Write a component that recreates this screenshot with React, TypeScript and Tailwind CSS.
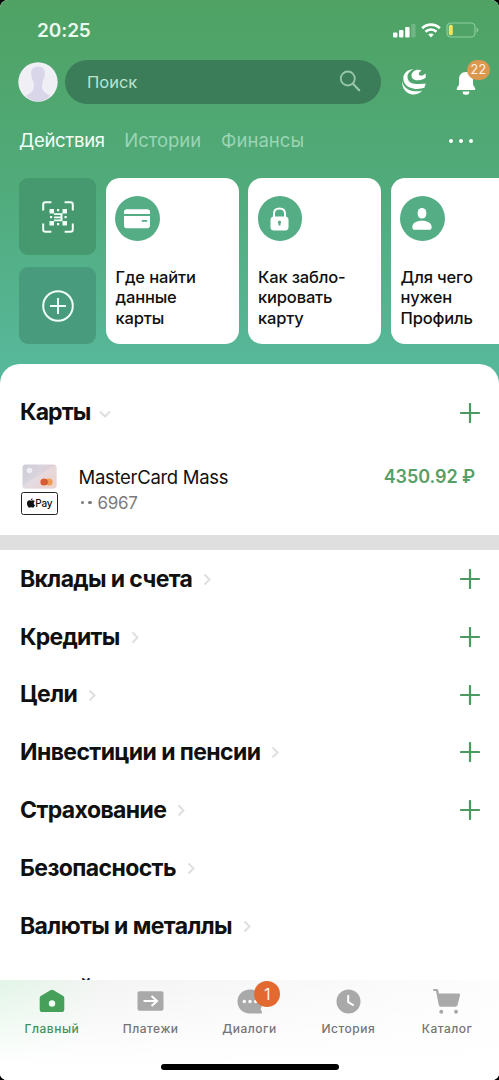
import type { ReactNode } from "react";
import clsx from "clsx";

interface Section {
  title: string;
  tracking: string;
  add?: boolean;
}

const SECTIONS: Section[] = [
  { title: "Вклады и счета", tracking: "tracking-[-0.63px]", add: true },
  { title: "Кредиты", tracking: "tracking-[-0.76px]", add: true },
  { title: "Цели", tracking: "tracking-[-0.6px]", add: true },
  { title: "Инвестиции и пенсии", tracking: "tracking-[-0.6px]", add: true },
  { title: "Страхование", tracking: "tracking-[-0.6px]", add: true },
  { title: "Безопасность", tracking: "tracking-[-0.6px]" },
  { title: "Валюты и металлы", tracking: "tracking-[-0.6px]" },
];

function Plus() {
  return (
    <svg width="20" height="20" viewBox="0 0 20 20" className="shrink-0">
      <path d="M10 1v18M1 10h18" stroke="#4a9a5f" strokeWidth="2.2" strokeLinecap="round" />
    </svg>
  );
}

function Chevron({ down }: { down?: boolean }) {
  return (
    <svg width="12" height="14" viewBox="0 0 12 14" fill="none" stroke="#dfdfdf" strokeWidth="2">
      {down ? <path d="M1 5.500l5 5 5-5" /> : <path d="M3.500 2.500L8.500 7.500l-5 5" />}
    </svg>
  );
}

function StatusBar() {
  return (
    <div className="flex h-[60px] items-center justify-between pr-5 pl-[37px]">
      <span className="mt-0.5 text-[19px] font-semibold tracking-[-0.1px] text-[#eafbf0]">20:25</span>
      <div className="flex items-center">
        <svg width="24" height="15" viewBox="0 0 24 15" fill="#fff">
          <rect x="1" y="9.5" width="4.4" height="5" rx="1" />
          <rect x="7" y="7" width="4.4" height="7.500" rx="1" />
          <rect x="13.200" y="4" width="4.400" height="10.500" rx="1" />
          <rect x="19.200" y="1" width="4.400" height="13.500" rx="1" opacity=".2" />
        </svg>
        <svg width="20" height="15" viewBox="0 0 20 15" fill="none" stroke="#fff" className="ml-[5px]">
          <path d="M1.200 5.200c5-4.900 12.600-4.900 17.600 0" strokeWidth="2.700" />
          <path d="M4.500 8.700c3.200-3 7.800-3 11 0" strokeWidth="2.600" />
          <path d="M10 14.500l-2.800-3c1.600-1.400 4-1.400 5.600 0z" fill="#fff" stroke="none" />
        </svg>
        <svg width="33" height="16" viewBox="0 0 33 16" className="ml-[5px]">
          <rect x="1" y="1" width="28" height="14" rx="4" fill="none" stroke="#8fcf9f" strokeWidth="1.200" />
          <rect x="2.800" y="2.800" width="4" height="10.400" rx="1.800" fill="#f2e35b" />
          <path d="M30.600 5.500c2.200.7 2.200 4.300 0 5z" fill="#8fcf9f" />
        </svg>
      </div>
    </div>
  );
}

function SearchRow() {
  return (
    <div className="flex h-11 items-center pl-[18px]">
      <svg width="40" height="40" viewBox="0 0 40 40" className="shrink-0">
        <circle cx="20" cy="20" r="19.700" fill="#f0eff6" />
        <path
          d="M20 4.500c-5 0-7.500 3.600-6.700 8.200.2 1 .1 1.700.3 2.600.4 2 1.200 2.300 1.700 4.300.6 2.600.9 4.500.3 7-.7 3-3.400 5-7.800 7.300 6.800 7.100 17.600 7.100 24.400 0-4.400-2.300-7.100-4.300-7.800-7.300-.6-2.500-.3-4.400.3-7 .5-2 1.300-2.300 1.700-4.300.2-.9.100-1.600.3-2.600.8-4.600-1.700-8.200-6.700-8.200z"
          fill="#d9d6e9"
        />
      </svg>
      <div className="ml-[7px] flex h-11 w-[316px] items-center justify-between rounded-full bg-[#3b7d58] pr-5 pl-[22px]">
        <span className="text-[16.5px] text-[#bfe3cb]">Поиск</span>
        <svg width="22" height="22" viewBox="0 0 22 22" fill="none" stroke="#98c7a8" strokeLinecap="round" className="-mt-0.5">
          <circle cx="8.800" cy="8.500" r="7" strokeWidth="1.800" />
          <path d="M14 13.800l6.200 6.400" strokeWidth="2.300" />
        </svg>
      </div>
      <svg width="26" height="28" viewBox="0 0 26 28" fill="#fff" className="ml-5 shrink-0">
        {/* swirl mark of the loyalty programme */}
        <path d="M12.500 1.300C8.500 3 6.300 6 6.500 9.300c.3 4.300 4 6.700 9.200 6.600 3.800-.1 6.800-.2 9-.5l-1.300 4.400c-2.600.9-5.500 1.300-8.800 1.100C7.500 20.500 2.300 16.300 2.300 10.300 2.400 5.300 6.500 1.500 12.500 1.300z" />
        <path d="M20.800 2.700C16.300.2 10.500 3.200 10.500 7.500c0 3.300 2.800 4.900 6.600 4.700 3-.1 5.500-1 7.600-2.400V5.600c-1.600 1.400-3.400 2.300-5 2-1.800-.3-2.300-1.500-1.700-2.700.600-1.200 1.500-1.800 2.800-2.200z" />
        <path d="M1.300 13c.6 5.600 5.300 9.900 12.500 10.300 2.700.2 5.200-.1 7.500-.8-2.600 2.900-6.200 4.400-10 4C5.200 25.600.4 20.200 1.300 13z" />
      </svg>
      <div className="relative ml-[28px] flex h-11 w-[22px] items-center justify-center">
        <svg width="20" height="24" viewBox="0 0 20 24" fill="#fff" className="mt-px">
          <path d="M10 1C5.400 1 3 4.300 3 8.400v4.500c0 2-2.300 3.300-2.300 5 0 .8.500 1.200 1.300 1.200h16c.8 0 1.300-.4 1.300-1.200 0-1.700-2.300-3-2.300-5V8.400C17 4.300 14.600 1 10 1zM6.700 20.500h6.600c0 2.800-1 3.200-3.300 3.200s-3.300-.4-3.300-3.200z" />
        </svg>
        <span className="absolute top-0 left-3 flex h-5 w-[23px] items-center justify-center rounded-full bg-[#dd9850] text-[12.500px] tracking-[0.3px] text-[#fff4e6]">
          22
        </span>
      </div>
    </div>
  );
}

function StoryCard({ icon, lines }: { icon: ReactNode; lines: string[] }) {
  return (
    <div className="h-[166px] w-[133px] shrink-0 rounded-[14px] bg-white pt-[18px] pl-[9.500px]">
      <div className="flex size-[44.500px] items-center justify-center rounded-full bg-[#54ad85]">{icon}</div>
      <div className="mt-[26.100px] ml-[0.5px] text-[16.500px] leading-[20.500px] font-medium tracking-[-0.15px] text-[#101010]">
        {lines.map((l) => (
          <div key={l} className="whitespace-nowrap">
            {l}
          </div>
        ))}
      </div>
    </div>
  );
}

function Actions() {
  return (
    <div className="flex gap-[9.500px] overflow-hidden pt-[0.4px] pl-[19px]">
      <div className="flex shrink-0 flex-col justify-between">
        <div className="flex size-[77px] items-center justify-center rounded-[9px] bg-[#46986f]">
          <svg width="32" height="32" viewBox="0 0 32 32" fill="#f1fff8">
            <path
              d="M1.200 9.500V3.400c0-1.400.8-2.200 2.200-2.200h6M22.600 1.200h6c1.400 0 2.200.8 2.200 2.200v6.100M30.800 22.500v6.100c0 1.400-.8 2.200-2.200 2.200h-6M9.400 30.800h-6c-1.400 0-2.200-.8-2.200-2.200v-6.100"
              fill="none"
              stroke="#f1fff8"
              strokeWidth="2"
            />
            <path d="M7.500 8h4.500v4.500h-4.500zM20.500 8h4.500v4.500h-4.500zM7.500 20h4.500v4.500h-4.500zM20.500 20h4.500v4.500h-4.500zM15 8h2.200v2.200h-2.200zM12 12.300h8.500v1.700h-8.500zM18.500 13.500h2v6.500h-2zM8 15h2.200v2.200h-2.200zM12 15.500h7v1.700h-7zM22.500 15h2.200v2.200h-2.200zM12 18.500h8.500v1.700h-8.500zM15 22h2.200v2.200h-2.200z" />
          </svg>
        </div>
        <div className="flex size-[77px] items-center justify-center rounded-[9px] bg-[#499b7d]">
          <svg width="32" height="32" viewBox="0 0 32 32" fill="none" stroke="#f1fffa" strokeWidth="2">
            <circle cx="16" cy="16" r="14.800" />
            <path d="M16 8v16M8 16h16" />
          </svg>
        </div>
      </div>
      <StoryCard
        lines={["Где найти", "данные", "карты"]}
        icon={
          <svg width="26" height="20" viewBox="0 0 26 20" fill="#fff">
            <path d="M0 5V3c0-1.700 1-2.700 2.700-2.700h20.600C25 .3 26 1.300 26 3v2z" />
            <path
              fillRule="evenodd"
              d="M0 7h26v9.600c0 1.700-1 2.700-2.700 2.700H2.700C1 19.300 0 18.300 0 16.600zm17.800 4v1.800h5.400V11z"
            />
          </svg>
        }
      />
      <StoryCard
        lines={["Как забло-", "кировать", "карту"]}
        icon={
          <svg width="19" height="24" viewBox="0 0 19 24">
            <path d="M4 11V6.500C4 3.300 6 1.500 9.500 1.500S15 3.300 15 6.500V11" fill="none" stroke="#fff" strokeWidth="2" />
            <rect x=".5" y="9.500" width="18" height="14" rx="3.500" fill="#fff" />
            <path
              d="M9.500 13.800c1 0 1.600.7 1.600 1.500 0 .6-.3 1-.6 1.300v2h-2v-2c-.3-.3-.6-.7-.6-1.300 0-.8.6-1.500 1.600-1.500z"
              fill="#54ad85"
            />
          </svg>
        }
      />
      <StoryCard
        lines={["Для чего", "нужен", "Профиль"]}
        icon={
          <svg width="20" height="22" viewBox="0 0 20 22" fill="#fff">
            <rect x="5.700" y="0" width="8.600" height="10.600" rx="4.300" />
            <path d="M.3 19.200c0-4 4-6.400 9.700-6.400s9.700 2.400 9.700 6.400c0 1.700-.9 2.600-2.600 2.600H2.900c-1.700 0-2.600-.9-2.600-2.600z" />
          </svg>
        }
      />
    </div>
  );
}

function CardAccount() {
  return (
    <div className="flex h-[62px] items-start pr-6 pl-[21px]">
      <div className="flex w-[37px] shrink-0 flex-col items-center gap-[3px] pt-[2.500px]">
        <svg width="35" height="25" viewBox="0 0 35 25">
          <defs>
            <linearGradient id="plastic" x1="0" y1="0" x2="1" y2=".6">
              <stop offset="0" stopColor="#ccccd8" />
              <stop offset=".5" stopColor="#dad3dc" />
              <stop offset="1" stopColor="#e8c6c0" />
            </linearGradient>
          </defs>
          <rect x=".5" y=".5" width="34" height="24" rx="3" fill="url(#plastic)" />
          <path d="M1 21L33 1c1 .5 1.500 1.200 1.500 2.500v18c0 2-1 3-3 3h-28C2 24.500 1 23 1 21z" fill="#f3e9ea" opacity=".4" />
          <circle cx="7.500" cy="6.500" r="2.800" fill="#eeeef6" />
          <circle cx="22" cy="18" r="3.600" fill="#db5a36" />
          <circle cx="27" cy="18" r="3.600" fill="#ef9b55" />
          <ellipse cx="24.500" cy="18" rx="1.300" ry="2.700" fill="#c95a2c" />
        </svg>
        <div className="flex h-[23px] w-[37px] items-center justify-center rounded-[2.500px] border border-[#222] bg-white">
          <svg width="8" height="10" viewBox="0 0 16 19" fill="#111">
            <path d="M11.200 0c.1 2-1.500 4-3.500 4C7.500 2 9.200.2 11.200 0zM8 5c1 0 2-.9 3.800-.9 1.500 0 3 .8 3.800 2-3.300 2-2.700 6.500.4 7.900-.8 2.200-2.500 4.800-4.200 4.800-1.300 0-1.800-.8-3.500-.8s-2.200.8-3.500.8C2.500 18.800 0 14 0 10.300 0 6.500 2.300 4.200 4.800 4.200 6.300 4.200 7.300 5 8 5z" />
          </svg>
          <span className="ml-[0.5px] text-[10px] leading-none font-medium tracking-[-0.2px] text-[#111]">Pay</span>
        </div>
      </div>
      <div className="ml-[20.500px] flex-1 pt-[2.500px]">
        <div className="text-[18.500px] leading-[26px] tracking-[-0.3px] text-[#111]">MasterCard Mass</div>
        <div className="flex items-center text-[17px] leading-[26px] tracking-[-0.3px] text-[#7b7b7b]">
          <span className="mr-[6px] ml-[2px] flex gap-[4px]">
            <i className="size-[3.500px] rounded-full bg-[#7b7b7b]" />
            <i className="size-[3.500px] rounded-full bg-[#7b7b7b]" />
          </span>
          6967
        </div>
      </div>
      <span className="pt-[3px] text-[18px] leading-[26px] font-semibold tracking-[-0.08px] text-[#579f66]">
        4350.92 ₽
      </span>
    </div>
  );
}

function Tab({ label, active, children }: { label: string; active?: boolean; children: ReactNode }) {
  return (
    <div className="flex flex-1 flex-col items-center pt-[7px]">
      <div className="relative flex h-7 items-center pl-[1.500px]">{children}</div>
      <span
        className={clsx(
          "mt-[5px] pl-[1px] text-[12px] leading-[18px] font-medium tracking-[0.5px] whitespace-nowrap",
          active ? "text-[#43905a]" : "text-[#747474]",
        )}
      >
        {label}
      </span>
    </div>
  );
}

function TabBar() {
  return (
    <div className="absolute inset-x-0 bottom-0 flex h-[100px] flex-col items-center bg-linear-to-r from-[#e2f5e7] via-[#f3f4f3] via-20% to-[#fdfdfd]">
      <div className="flex h-[84px] w-full bg-linear-to-b from-white/0 to-white pr-[3px] pl-[2px]">
        <Tab label="Главный" active>
          <svg width="26" height="24" viewBox="0 0 26 24">
            <path
              d="M11 1.400c1.300-.8 2.700-.8 4 0l8.500 5c1.300.8 1.800 1.600 1.800 3.100v10.700c0 1.900-1 2.900-2.900 2.900H3.600c-1.900 0-2.900-1-2.900-2.900V9.500c0-1.500.5-2.300 1.800-3.100z"
              fill="#47a05a"
            />
            <circle cx="13" cy="14.500" r="3.200" fill="#f1fff4" />
          </svg>
        </Tab>
        <Tab label="Платежи">
          <svg width="27" height="20" viewBox="0 0 27 20" fill="none">
            <rect x=".5" y=".3" width="26" height="19.400" rx="2" fill="#a9a9a9" />
            <path d="M6.500 10h13M14.500 5l5.500 5-5.500 5" stroke="#fff" strokeWidth="2.100" />
          </svg>
        </Tab>
        <Tab label="Диалоги">
          <svg width="26" height="25" viewBox="0 0 26 25">
            <path
              d="M13 .5C5.700.5.500 5.700.500 12.500S5.700 24.500 13 24.500h11c1 0 1.300-.6.9-1.400l-1.300-3.300c1.300-2 2-4.500 2-7.300C25.600 5.700 20.300.500 13 .500z"
              fill="#a9a9a9"
            />
            <circle cx="7.300" cy="12.500" r="1.700" fill="#fff" />
            <circle cx="13" cy="12.500" r="1.700" fill="#fff" />
            <circle cx="18.700" cy="12.500" r="1.700" fill="#fff" />
          </svg>
          <span className="absolute -top-[6px] left-[19px] flex size-[26px] items-center justify-center rounded-full bg-[#e26a31] text-[16px] text-[#fff3e8]">
            1
          </span>
        </Tab>
        <Tab label="История">
          <svg width="25" height="25" viewBox="0 0 25 25" fill="none">
            <circle cx="12.500" cy="12.500" r="12" fill="#a9a9a9" />
            <path d="M12.200 6v7.200l5.500 3.200" stroke="#fff" strokeWidth="2" />
          </svg>
        </Tab>
        <Tab label="Каталог">
          <svg width="28" height="26" viewBox="0 0 28 26" fill="#a9a9a9">
            <path d="M.3 1h3.400c.8 0 1.300.4 1.500 1.200l.7 3.300h19.500c1.200 0 1.900.8 1.600 2l-2.400 9.200c-.3 1.300-1.200 2-2.500 2H8c-1.300 0-2-.7-2.300-2L3 3H.3z" />
            <circle cx="8.300" cy="23.700" r="2" />
            <circle cx="23" cy="23.700" r="2" />
          </svg>
        </Tab>
      </div>
      <div className="flex w-full flex-1 justify-center bg-white">
        <div className="h-[6px] w-[178px] rounded-full bg-black" />
      </div>
    </div>
  );
}

export default function App() {
  return (
    <div className="h-[1080px] w-full overflow-hidden bg-black font-['Inter','Liberation_Sans',sans-serif]">
      <div className="relative h-full overflow-hidden rounded-t-[8px] rounded-b-[7px] bg-white">
        <div className="h-[390px] bg-linear-to-b from-[#4fa263] via-[#50aa79] via-45% to-[#58b99e]">
          <StatusBar />
          <SearchRow />

          <div className="flex h-[74px] items-center pr-[26px] pl-[19px] text-[18.500px] text-[#9bd5b5]">
            <span className="tracking-[-0.28px] text-[#f2fff8]">Действия</span>
            <span className="ml-[19.500px] tracking-[-0.05px]">Истории</span>
            <span className="ml-[20px] tracking-[0.05px]">Финансы</span>
            <span className="ml-auto flex gap-[5.500px]">
              <i className="size-[4.500px] rounded-full bg-white" />
              <i className="size-[4.500px] rounded-full bg-white" />
              <i className="size-[4.500px] rounded-full bg-white" />
            </span>
          </div>

          <Actions />
        </div>

        {/* Products sheet, overlaps the header with its rounded top */}
        <div className="relative -mt-[26px] rounded-t-[20px] bg-white">
          <div className="flex h-[97px] items-center justify-between pr-[19px] pl-5">
            <div className="flex items-center gap-[9px]">
              <h2 className="text-[23px] font-bold tracking-[-0.9px] text-[#101010]">Карты</h2>
              <Chevron down />
            </div>
            <Plus />
          </div>
          <CardAccount />
          <div className="mt-3 h-[14.500px] bg-[#dfdfdf]" />
          <div className="pt-[0.5px]">
            {SECTIONS.map((s) => (
              <div key={s.title} className="flex h-[57.850px] items-center justify-between pr-[19px] pl-5">
                <div className="flex items-center gap-[9px]">
                  <h2 className={clsx("text-[23px] font-bold text-[#101010]", s.tracking)}>{s.title}</h2>
                  <Chevron />
                </div>
                {s.add && <Plus />}
              </div>
            ))}
          </div>
          {/* Next section, mostly under the tab bar */}
          <h2 className="pt-[16px] pl-[22px] text-[23px] font-bold tracking-[-0.7px] text-[#101010]">
            семейная группа
          </h2>
        </div>

        <TabBar />
      </div>
    </div>
  );
}
